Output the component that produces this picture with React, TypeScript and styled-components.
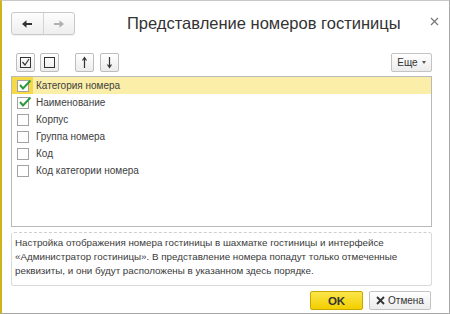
import React from "react";
import styled, { createGlobalStyle } from "styled-components";

const Global = createGlobalStyle`
  html, body { margin: 0; padding: 0; background: #fff; }
  body { font-family: "Liberation Sans", Arial, sans-serif; }
  * { box-sizing: border-box; }
`;

const Window = styled.div`
  width: 450px;
  height: 314px;
  background: #fff;
  border-left: 2px solid #cdb31c;
  border-right: 1px solid #a8a8a8;
  border-top: 1px solid #c8c8c8;
  border-bottom: 1px solid #a8a8a8;
  display: flex;
  flex-direction: column;
  padding: 11px 17px 0 9px;
`;

const Header = styled.div`
  display: flex;
  align-items: center;
  height: 23px;
`;

const NavGroup = styled.div`
  display: flex;
  width: 64px;
  height: 23px;
  border: 1px solid #c9c9c9;
  border-radius: 3px;
  background: linear-gradient(#fdfdfd, #eeeeee);
  box-shadow: 0 1px 1px rgba(0,0,0,0.06);
`;

const NavBtn = styled.div<{ $sep?: boolean }>`
  flex: 1;
  display: flex;
  align-items: center;
  justify-content: center;
  border-left: ${p => (p.$sep ? "1px solid #d4d4d4" : "none")};
`;

const Title = styled.div`
  flex: 1;
  font-size: 16.5px;
  color: #333;
  padding-left: 52px;
  white-space: nowrap;
`;

const Close = styled.div`
  display: flex;
  margin-right: -7px;
  margin-top: -4px;
`;

const Toolbar = styled.div`
  display: flex;
  align-items: center;
  height: 19px;
  margin-top: 18px;
  padding-left: 5px;
`;

const ToolBtn = styled.div<{ $gap?: number }>`
  width: 19px;
  height: 19px;
  margin-left: ${p => p.$gap ?? 0}px;
  border: 1px solid #bdbdbd;
  border-radius: 2px;
  background: linear-gradient(#ffffff, #ececec);
  display: flex;
  align-items: center;
  justify-content: center;
`;

const Spacer = styled.div`
  flex: 1;
`;

const MoreBtn = styled.div`
  height: 19px;
  width: 41px;
  border: 1px solid #c3c3c3;
  border-radius: 2px;
  background: linear-gradient(#ffffff, #ececec);
  font-size: 10px;
  color: #333;
  display: flex;
  align-items: center;
  justify-content: center;
  gap: 4px;
`;

const Caret = styled.span`
  width: 0;
  height: 0;
  border-left: 2.5px solid transparent;
  border-right: 2.5px solid transparent;
  border-top: 3px solid #555;
`;

const List = styled.div`
  height: 151px;
  margin-top: 4px;
  border: 1px solid #b9b9b9;
  display: flex;
  flex-direction: column;
`;

const Row = styled.div<{ $active?: boolean }>`
  display: flex;
  align-items: center;
  height: 17px;
  flex-shrink: 0;
  background: ${p => (p.$active ? "#fbeea8" : "transparent")};
`;

const CheckCell = styled.div<{ $active?: boolean }>`
  width: 21px;
  height: 100%;
  display: flex;
  align-items: center;
  justify-content: center;
  background: ${p => (p.$active ? "#f6da45" : "transparent")};
`;

const Box = styled.div`
  width: 12px;
  height: 12px;
  border: 1px solid #a2a2a2;
  background: #fff;
  position: relative;
`;

const RowText = styled.div`
  font-size: 10px;
  color: #404040;
  padding-left: 3px;
`;

const Note = styled.div`
  margin-top: 5px;
  height: 54px;
  border: 1px solid #dadada;
  border-top: 1px dashed #cfcfcf;
  border-radius: 3px;
  padding: 3px 3px;
  font-size: 9.8px;
  line-height: 14px;
  color: #3a3a3a;
`;

const Footer = styled.div`
  display: flex;
  justify-content: flex-end;
  gap: 6px;
  margin-top: 5px;
  margin-right: 1px;
`;

const OkBtn = styled.div`
  width: 53px;
  height: 19px;
  border: 1px solid #c9a800;
  border-radius: 2px;
  background: linear-gradient(#fbe54a, #f2cf00);
  font-weight: bold;
  font-size: 11.5px;
  color: #333;
  display: flex;
  align-items: center;
  justify-content: center;
`;

const CancelBtn = styled.div`
  width: 62px;
  height: 19px;
  border: 1px solid #c3c3c3;
  border-radius: 2px;
  background: linear-gradient(#ffffff, #ececec);
  font-size: 10px;
  color: #333;
  display: flex;
  align-items: center;
  justify-content: center;
  gap: 3px;
`;

const Check = () => (
  <svg width="14" height="12" viewBox="0 0 14 12" style={{ position: "absolute", left: 0, top: -2 }}>
    <path d="M2 6 L5 9.5 L12.5 1.5" fill="none" stroke="#2e9a3c" strokeWidth="2" />
  </svg>
);

const rows = [
  { t: "Категория номера", c: true, a: true },
  { t: "Наименование", c: true },
  { t: "Корпус" },
  { t: "Группа номера" },
  { t: "Код" },
  { t: "Код категории номера" },
];

export default function App() {
  return (
    <>
      <Global />
      <Window>
        <Header>
          <NavGroup>
            <NavBtn>
              <svg width="12" height="10" viewBox="0 0 12 10">
                <path d="M1 5 L5.5 1.2 L5.5 4 L11 4 L11 6 L5.5 6 L5.5 8.8 Z" fill="#333" />
              </svg>
            </NavBtn>
            <NavBtn $sep>
              <svg width="12" height="10" viewBox="0 0 12 10">
                <path d="M11 5 L6.5 1.2 L6.5 4 L1 4 L1 6 L6.5 6 L6.5 8.8 Z" fill="#b0b0b0" />
              </svg>
            </NavBtn>
          </NavGroup>
          <Title>Представление номеров гостиницы</Title>
          <Close>
            <svg width="9" height="9" viewBox="0 0 9 9">
              <path d="M1 1 L8 8 M8 1 L1 8" stroke="#777" strokeWidth="1.2" />
            </svg>
          </Close>
        </Header>
        <Toolbar>
          <ToolBtn>
            <svg width="13" height="13" viewBox="0 0 13 13">
              <rect x="1.5" y="1.5" width="10" height="10" fill="none" stroke="#333" />
              <path d="M3.5 6 L6 9 L10 3" fill="none" stroke="#333" strokeWidth="1.2" />
            </svg>
          </ToolBtn>
          <ToolBtn $gap={5}>
            <svg width="13" height="13" viewBox="0 0 13 13">
              <rect x="1.5" y="1.5" width="10" height="10" fill="none" stroke="#333" />
            </svg>
          </ToolBtn>
          <ToolBtn $gap={16}>
            <svg width="9" height="13" viewBox="0 0 9 13">
              <path d="M4.5 12 L4.5 2 M2.5 4.5 L4.5 1.5 L6.5 4.5" fill="none" stroke="#333" strokeWidth="1.2" />
            </svg>
          </ToolBtn>
          <ToolBtn $gap={6}>
            <svg width="9" height="13" viewBox="0 0 9 13">
              <path d="M4.5 1 L4.5 11 M2.5 8.5 L4.5 11.5 L6.5 8.5" fill="none" stroke="#333" strokeWidth="1.2" />
            </svg>
          </ToolBtn>
          <Spacer />
          <MoreBtn>
            Еще <Caret />
          </MoreBtn>
        </Toolbar>
        <List>
          {rows.map(r => (
            <Row key={r.t} $active={r.a}>
              <CheckCell $active={r.a}>
                <Box>{r.c && <Check />}</Box>
              </CheckCell>
              <RowText>{r.t}</RowText>
            </Row>
          ))}
        </List>
        <Note>
          Настройка отображения номера гостиницы в шахматке гостиницы и интерфейсе «Администратор гостиницы». В представление номера попадут только отмеченные реквизиты, и они будут расположены в указанном здесь порядке.
        </Note>
        <Footer>
          <OkBtn>OK</OkBtn>
          <CancelBtn>
            <svg width="9" height="9" viewBox="0 0 9 9">
              <path d="M1 1 L8 8 M8 1 L1 8" stroke="#333" strokeWidth="1.8" />
            </svg>
            Отмена
          </CancelBtn>
        </Footer>
      </Window>
    </>
  );
}
